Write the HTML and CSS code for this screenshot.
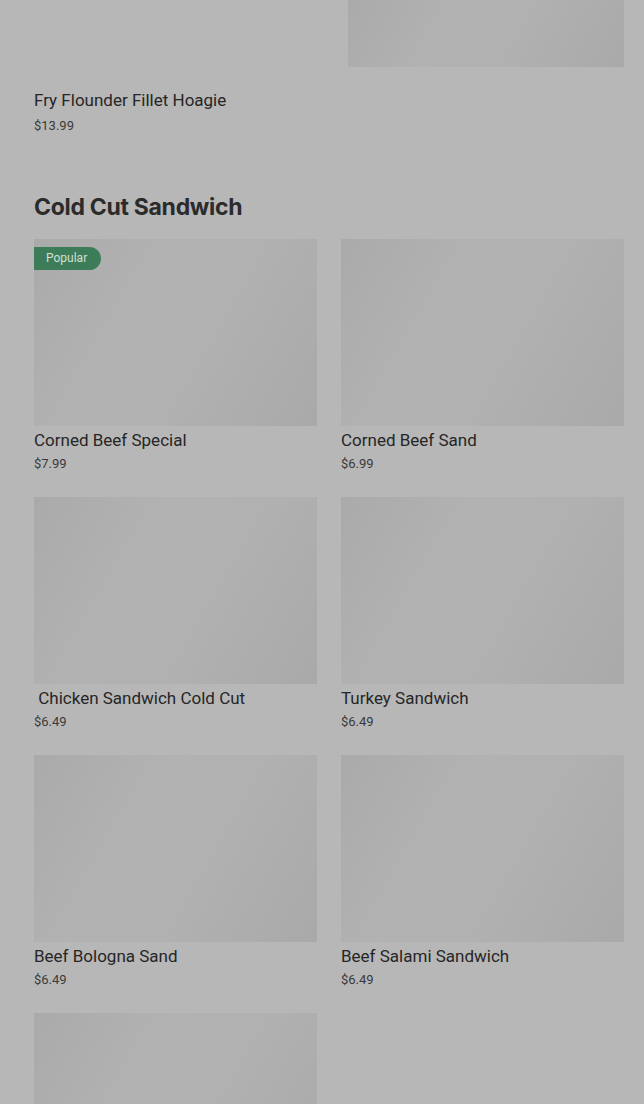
FILE: index.html
```html
<!DOCTYPE html>
<html lang="en">
<head>
    <meta charset="UTF-8">
    <meta name="viewport" content="width=device-width, initial-scale=1.0">
    <title>Menu</title>
    <link rel="stylesheet" href="styles.css">
</head>
<body>

    <div class="menu">
        <!-- tail of the previous category -->
        <div class="item-grid top-row">
            <div class="item no-photo">
                <div class="item-name">Fry Flounder Fillet Hoagie</div>
                <div class="item-price">$13.99</div>
            </div>
            <div class="item">
                <div class="item-photo cut"></div>
            </div>
        </div>

        <section class="category">
            <h2>Cold Cut Sandwich</h2>
            <div class="item-grid">
                <div class="item">
                    <div class="item-photo"><span class="badge">Popular</span></div>
                    <div class="item-name">Corned Beef Special</div>
                    <div class="item-price">$7.99</div>
                </div>
                <div class="item">
                    <div class="item-photo"></div>
                    <div class="item-name">Corned Beef Sand</div>
                    <div class="item-price">$6.99</div>
                </div>
                <div class="item">
                    <div class="item-photo"></div>
                    <div class="item-name">&nbsp;Chicken Sandwich Cold Cut</div>
                    <div class="item-price">$6.49</div>
                </div>
                <div class="item">
                    <div class="item-photo"></div>
                    <div class="item-name">Turkey Sandwich</div>
                    <div class="item-price">$6.49</div>
                </div>
                <div class="item">
                    <div class="item-photo"></div>
                    <div class="item-name">Beef Bologna Sand</div>
                    <div class="item-price">$6.49</div>
                </div>
                <div class="item">
                    <div class="item-photo"></div>
                    <div class="item-name">Beef Salami Sandwich</div>
                    <div class="item-price">$6.49</div>
                </div>
                <div class="item">
                    <div class="item-photo"></div>
                </div>
            </div>
        </section>
    </div>

</body>
</html>
```

FILE: styles.css
```css
/* page is shown under a dimmed modal backdrop */
body {
    margin: 0;
    padding: 0;
    background-color: #b7b7b7;
    font-family: Roboto, "Liberation Sans", sans-serif;
    color: #2f2f2f;
    height: 1104px;
    overflow: hidden;
}

.menu {
    padding: 0 20px 0 34px;
}

.item-grid {
    display: grid;
    grid-template-columns: 1fr 1fr;
    column-gap: 24px;
    row-gap: 24px;
}

.top-row .no-photo {
    padding-top: 86px;
}

.top-row .no-photo .item-price {
    margin-top: 5px;
}

.top-row .item-photo.cut {
    height: 67px;
    margin-left: 7px;
}

.category h2 {
    font-family: Inter, "Noto Sans", sans-serif;
    font-size: 23px;
    font-weight: 700;
    letter-spacing: -0.3px;
    line-height: 32px;
    color: #2b2b2b;
    margin: 56px 0 16px 0;
}

.item-photo {
    position: relative;
    height: 187px;
    background: linear-gradient(120deg, #aaaaaa 0%, #b2b2b2 35%, #b1b1b1 60%, #a9a9a9 100%);
}

.badge {
    position: absolute;
    top: 8px;
    left: 0;
    height: 23px;
    line-height: 23px;
    padding: 0 14px 0 12px;
    background-color: #3d7c59;
    color: #cfe0d4;
    font-size: 12px;
    border-radius: 0 12px 12px 0;
}

.item-name {
    font-size: 17px;
    font-weight: 400;
    line-height: 24px;
    margin-top: 2px;
    color: #262626;
}

.item-price {
    font-size: 13px;
    line-height: 18px;
    margin-top: 3px;
    color: #3a3a3a;
}
```
